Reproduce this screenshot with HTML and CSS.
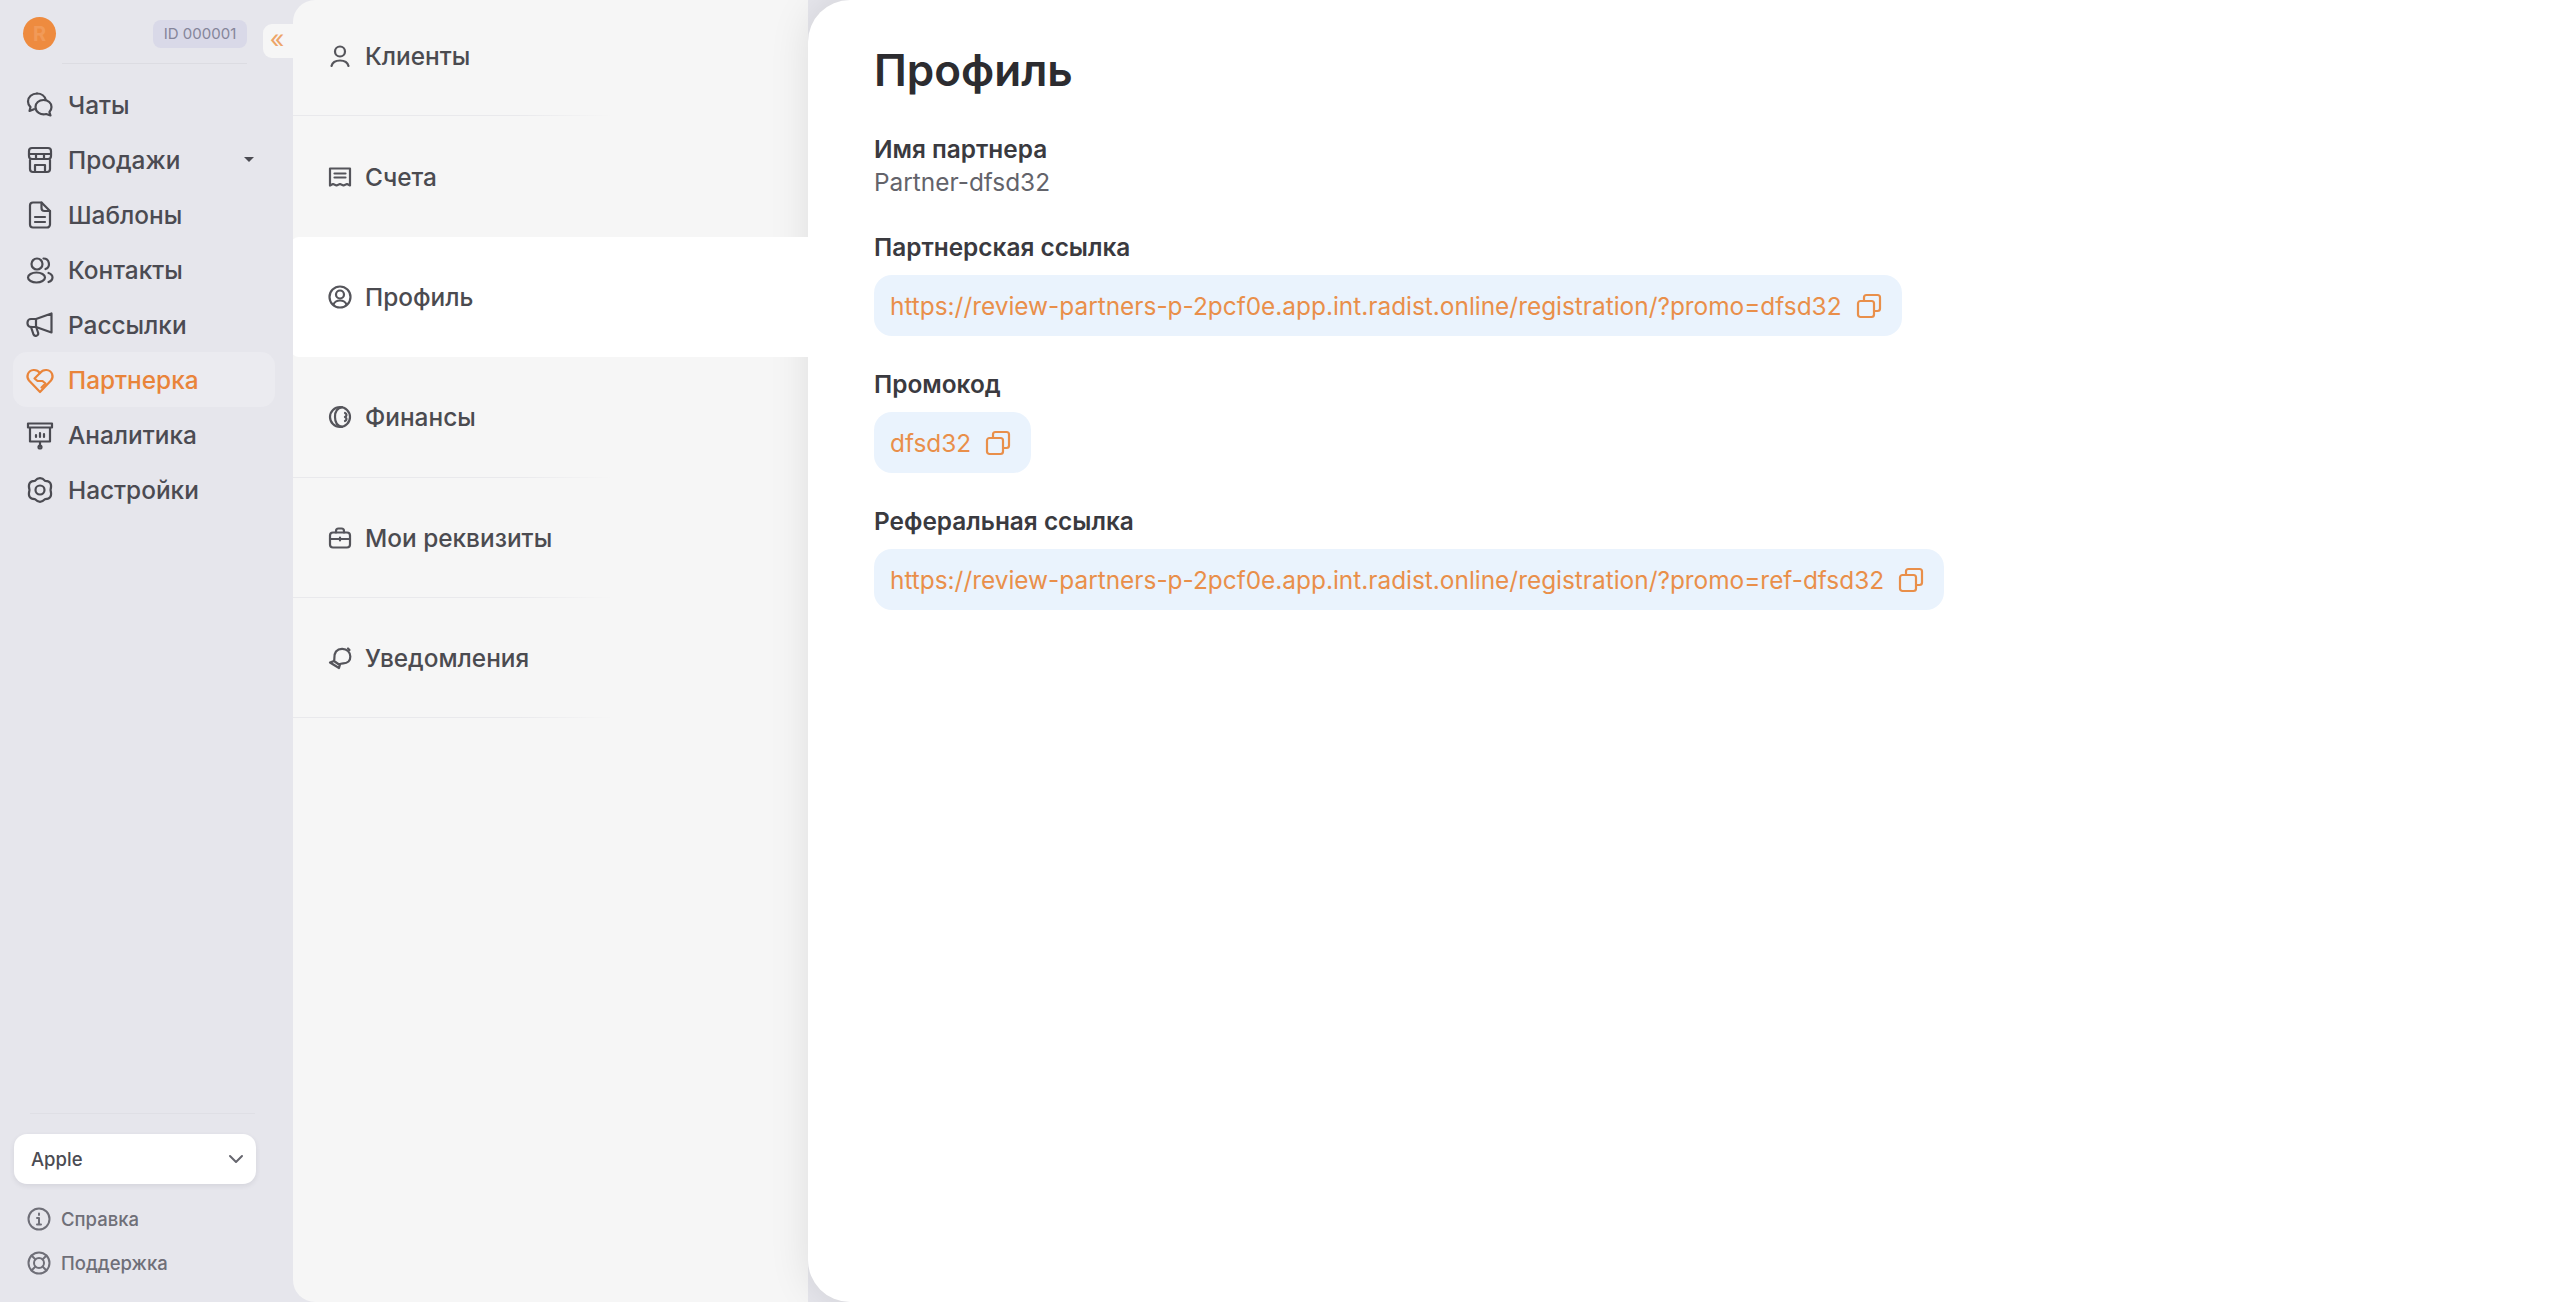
FILE: index.html
```html
<!DOCTYPE html>
<html lang="ru">
<head>
<meta charset="utf-8">
<title>Профиль</title>
<link rel="stylesheet" href="styles.css">
</head>
<body>
<div class="app">
  <aside class="sidebar">
    <div class="brand">
      <div class="logo">R</div>
      <div class="id-chip">ID 000001</div>
    </div>
    <button class="collapse" aria-label="Свернуть">«</button>
    <nav class="nav">
      <a class="nav-item"><svg class="nav-icon" viewBox="0 0 30 30"><path d="M12 3.5c-5 0-9 3.4-9 8 0 2.2 1 4.200 2.500 5.600L4.500 21l4.500-1.800"/><path d="M12 3.500c4.500 0 8 2.800 8.800 6.500"/><path d="M18.500 10c4.700 0 8 3 8 7 0 1.900-.8 3.700-2.100 5l1.100 3.500-4.300-1.500c-5.700 1.200-10.700-1.900-10.700-7 0-4 3.300-7 8-7z"/></svg><span>Чаты</span></a>
      <a class="nav-item"><svg class="nav-icon" viewBox="0 0 30 30"><path d="M5 15v9a3 3 0 0 0 3 3h14a3 3 0 0 0 3-3v-9"/><path d="M7 3h16a3 3 0 0 1 3 3v5a3 3 0 0 1-3 3H7a3 3 0 0 1-3-3V6a3 3 0 0 1 3-3z"/><path d="M4 9h22M11 9v5M19 9v5M10 27v-7h10v7"/></svg><span>Продажи</span><i class="caret"></i></a>
      <a class="nav-item"><svg class="nav-icon" viewBox="0 0 30 30"><path d="M8 2.500h8.500L25 11v13.500a3 3 0 0 1-3 3H8a3 3 0 0 1-3-3v-19a3 3 0 0 1 3-3z"/><path d="M16.500 2.500V8a3 3 0 0 0 3 3H25M10 17h10M10 22h10"/></svg><span>Шаблоны</span></a>
      <a class="nav-item"><svg class="nav-icon" viewBox="0 0 30 30"><circle cx="12" cy="9" r="5.500"/><ellipse cx="11.500" cy="22.500" rx="8.500" ry="5"/><path d="M18.500 3.500a5.500 5.500 0 0 1 2 10.600M23.500 18c2.500.8 4 2.500 4 4.500s-1.500 3.700-4 4.500"/></svg><span>Контакты</span></a>
      <a class="nav-item"><svg class="nav-icon" viewBox="0 0 30 30"><path d="M26.500 3.500v19L11 17H6a3.500 3.500 0 0 1-3.500-3.500v-1A3.500 3.500 0 0 1 6 9h5z"/><path d="M11 9v8M6 17l2.500 7.500a2.500 2.500 0 0 0 4.700-1.500L11.500 18"/></svg><span>Рассылки</span></a>
      <a class="nav-item active"><svg class="nav-icon" viewBox="0 0 30 30"><path d="M15 27 4 15.500C1 12 2.500 5.500 8.500 5c3-.2 5 1 6.500 3 1.500-2 3.500-3.200 6.500-3 6 .5 7.500 7 4.500 10.500z"/><path d="M15 8l-5.500 5.500 3 2.500h5l3 2.500-4 4"/></svg><span>Партнерка</span></a>
      <a class="nav-item"><svg class="nav-icon" viewBox="0 0 30 30"><path d="M3 3.500h24v4H3zM5 7.500v14h20v-14M15 21.500V26"/><circle cx="15" cy="27" r="1.500"/><path d="M11 17v-2M15 17v-4M19 17v-3"/></svg><span>Аналитика</span></a>
      <a class="nav-item"><svg class="nav-icon" viewBox="0 0 30 30"><path d="M9.750 5.900Q15 .5 20.250 5.900 28 6 25.500 15 28 24 20.250 24.100 15 29.500 9.750 24.100 2 24 4.500 15 2 6 9.750 5.900z"/><circle cx="15" cy="15" r="4.500"/></svg><span>Настройки</span></a>
    </nav>
    <div class="sidebar-foot">
      <div class="company"><span>Apple</span><svg class="chevron" viewBox="0 0 16 10"><path d="M2 2l6 6 6-6"/></svg></div>
      <a class="foot-link"><svg class="foot-icon" viewBox="0 0 24 24"><circle cx="12" cy="12" r="10.500"/><path d="M12 11v6.500M10 11h2M10 17.500h4M12 6.500v1.500"/></svg><span>Справка</span></a>
      <a class="foot-link"><svg class="foot-icon" viewBox="0 0 24 24"><circle cx="12" cy="12" r="10.500"/><circle cx="12" cy="12" r="5"/><path d="M4.500 4.500l4 4M19.500 4.500l-4 4M4.500 19.500l4-4M19.500 19.500l-4-4"/></svg><span>Поддержка</span></a>
    </div>
  </aside>

  <section class="subnav">
    <a class="tab"><svg class="tab-icon" viewBox="0 0 24 24"><circle cx="12" cy="7.500" r="5"/><path d="M3.500 22c1-4 4.500-5.500 8.500-5.500s7.500 1.500 8.500 5.500"/></svg><span>Клиенты</span></a>
    <a class="tab"><svg class="tab-icon" viewBox="0 0 24 24"><path d="M2 3.500h20v17l-3 -1.500-3.500 1.500-3.500-1.500-3.500 1.500-3.500-1.500-3 1.500z"/><path d="M6.500 8.500h11M6.500 12.500h11"/></svg><span>Счета</span></a>
    <a class="tab current"><svg class="tab-icon" viewBox="0 0 24 24"><circle cx="12" cy="12" r="10.500"/><circle cx="12" cy="9.500" r="4"/><path d="M5.500 19.500c1.200-3 3.500-4 6.500-4s5.300 1 6.500 4"/></svg><span>Профиль</span></a>
    <a class="tab"><svg class="tab-icon" viewBox="0 0 24 24"><circle cx="12" cy="12" r="10"/><path d="M14 2.200C9 3 7 7 7 12s2 9 7 9.800M17 8c2 1 2 3 0 4M17 12c2 1 2 3 0 4"/></svg><span>Финансы</span></a>
    <a class="tab"><svg class="tab-icon" viewBox="0 0 24 24"><rect x="2" y="6.500" width="20" height="15" rx="3"/><path d="M8 6.500V5a2.500 2.500 0 0 1 2.500-2.500h3A2.500 2.500 0 0 1 16 5v1.500M2 13h20M12 11.500v3"/></svg><span>Мои реквизиты</span></a>
    <a class="tab"><svg class="tab-icon" viewBox="0 0 24 24"><path d="M6 15c1-3-.5-6 2-9.500C11 2 17 2 20 5s3 8 .5 10.500c-3.500 3-6 1-9.500 3z"/><path d="M6 15l-4 1.500 9 5.500 1-3.500M20 2.500l1.500 1.500"/></svg><span>Уведомления</span></a>
  </section>

  <main class="content">
    <h1 class="title">Профиль</h1>
    <div class="field">
      <div class="label">Имя партнера</div>
      <div class="value">Partner-dfsd32</div>
    </div>
    <div class="field">
      <div class="label">Партнерская ссылка</div>
      <div class="pill"><span>https://review-partners-p-2pcf0e.app.int.radist.online/registration/?promo=dfsd32</span><svg class="copy" viewBox="0 0 26 26"><rect x="2" y="8" width="16" height="16" rx="2.500"/><path d="M8 8V4.500A2.500 2.500 0 0 1 10.500 2h11A2.500 2.500 0 0 1 24 4.500v11a2.500 2.500 0 0 1-2.500 2.500H18"/></svg></div>
    </div>
    <div class="field">
      <div class="label">Промокод</div>
      <div class="pill"><span>dfsd32</span><svg class="copy" viewBox="0 0 26 26"><rect x="2" y="8" width="16" height="16" rx="2.500"/><path d="M8 8V4.500A2.500 2.500 0 0 1 10.500 2h11A2.500 2.500 0 0 1 24 4.500v11a2.500 2.500 0 0 1-2.500 2.500H18"/></svg></div>
    </div>
    <div class="field">
      <div class="label">Реферальная ссылка</div>
      <div class="pill"><span>https://review-partners-p-2pcf0e.app.int.radist.online/registration/?promo=ref-dfsd32</span><svg class="copy" viewBox="0 0 26 26"><rect x="2" y="8" width="16" height="16" rx="2.500"/><path d="M8 8V4.500A2.500 2.500 0 0 1 10.500 2h11A2.500 2.500 0 0 1 24 4.500v11a2.500 2.500 0 0 1-2.500 2.500H18"/></svg></div>
    </div>
  </main>
</div>
</body>
</html>
```

FILE: styles.css
```css
* { box-sizing: border-box; }
html, body { margin: 0; height: 100%; overflow: hidden; }
body { font-family: Inter, "Noto Sans", sans-serif; color: #3d3d42; background: #e6e6ec; }
.app { display: flex; height: 1302px; position: relative; }

/* left rail */
.sidebar { width: 293px; flex: none; display: flex; flex-direction: column; background: #e6e6ec; position: relative; z-index: 3; }
.brand { display: flex; align-items: center; justify-content: space-between; height: 64px; margin: 0 46px 0 23px; padding-top: 3px; position: relative; }
.brand::after { content: ""; position: absolute; left: 39px; right: 0; bottom: 0; height: 1px; background: #dcdce2; }
.logo { width: 33px; height: 33px; border-radius: 50%; background: #ee8b3f; color: #f19a58; font-size: 20px; font-weight: 700; display: flex; align-items: center; justify-content: center; }
.id-chip { width: 94px; height: 28px; background: #d9d9e8; border-radius: 8px; color: #85859a; font-size: 15px; display: flex; align-items: center; justify-content: center; }
.collapse { position: absolute; left: 263px; top: 24px; width: 32px; height: 34px; border: 0; padding: 0 4px 4px 0; background: #f6f6f6; border-radius: 9px 0 0 9px; color: #eda468; font-size: 25px; line-height: 1; font-family: Inter, sans-serif; }

.nav { display: flex; flex-direction: column; margin-top: 13px; padding: 0 18px 0 13px; }
.nav-item { height: 55px; display: flex; align-items: center; padding-left: 12px; gap: 13px; font-size: 24.400px; font-weight: 500; color: #4b4b52; border-radius: 14px; }
.nav-item.active { background: #ebebf0; color: #e9843a; }
.nav-icon { width: 30px; height: 30px; flex: none; fill: none; stroke: currentColor; stroke-width: 2.200; stroke-linecap: round; stroke-linejoin: round; }
.caret { margin-left: auto; margin-right: 21px; width: 0; height: 0; border-left: 5px solid transparent; border-right: 5px solid transparent; border-top: 5px solid #4b4b52; }

.sidebar-foot { margin-top: auto; padding: 21px 37px 17px 14px; position: relative; }
.sidebar-foot::before { content: ""; position: absolute; left: 30px; right: 38px; top: 0; height: 1px; background: #dfdfe5; }
.company { height: 50px; background: #fff; border-radius: 13px; box-shadow: 0 2px 5px rgba(60, 60, 80, .1); display: flex; align-items: center; justify-content: space-between; padding: 0 12px 0 17px; font-size: 18.500px; font-weight: 500; color: #4b4b52; margin-bottom: 13px; }
.chevron { width: 16px; height: 10px; fill: none; stroke: #66666e; stroke-width: 2; stroke-linecap: round; stroke-linejoin: round; }
.foot-link { height: 44px; display: flex; align-items: center; gap: 10px; padding-left: 13px; font-size: 18.500px; font-weight: 500; color: #6f6f78; }
.foot-icon { width: 24px; height: 24px; flex: none; fill: none; stroke: #6f6f78; stroke-width: 2; stroke-linecap: round; }

/* section tabs */
.subnav { width: 515px; flex: none; background: #f6f6f6; border-radius: 22px 0 0 22px; display: flex; flex-direction: column; position: relative; }
.tab { height: 120.400px; flex: none; display: flex; align-items: center; gap: 13px; padding-left: 35px; font-size: 24.400px; font-weight: 500; color: #4b4b50; position: relative; transform: translateY(-4px); }
.tab::after { content: ""; position: absolute; left: 0; bottom: 0; width: 320px; height: 1px; background: linear-gradient(90deg, #e9e9ec 70%, rgba(233, 233, 236, 0)); }
.tab.current { background: #fff; width: 517px; margin-left: -2px; padding-left: 37px; z-index: 2; border-radius: 8px 0 0 8px; }
.tab.current::after, .tab:nth-child(2)::after { display: none; }
.tab-icon { width: 24px; height: 24px; flex: none; fill: none; stroke: #55555b; stroke-width: 2.200; stroke-linecap: round; stroke-linejoin: round; }

/* main content */
.content { flex: 1; background: #fff; border-radius: 42px 0 0 42px; box-shadow: 0 0 40px rgba(0, 0, 0, .1); padding: 42px 0 0 66px; position: relative; z-index: 1; }
.title { margin: 0 0 35px; font-size: 44px; line-height: 56px; font-weight: 600; color: #2c2c30; }
.field { margin-bottom: 32px; }
.label { font-size: 24.400px; line-height: 33px; font-weight: 600; color: #3a3a3f; }
.value { font-size: 24.400px; line-height: 33px; color: #63636a; }
.pill { display: inline-flex; align-items: center; height: 61px; margin-top: 11px; padding: 0 20px 0 16px; gap: 14px; background: #eaf3fd; border-radius: 18px; color: #e98f4a; font-size: 24.400px; }
.copy { width: 26px; height: 26px; flex: none; fill: none; stroke: #e98f4a; stroke-width: 2.200; }
```
